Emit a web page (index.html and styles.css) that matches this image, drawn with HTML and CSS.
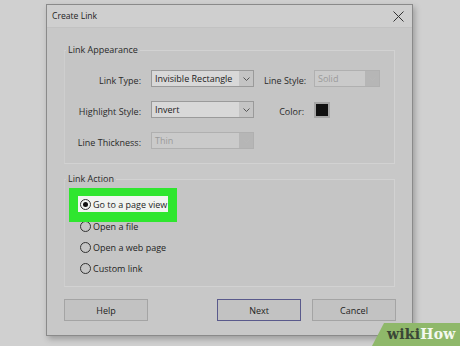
FILE: index.html
```html
<!DOCTYPE html>
<html>
<head>
<meta charset="utf-8">
<link rel="stylesheet" href="styles.css">
</head>
<body>
<div class="dialog">
  <div class="titlebar">
    <span class="title">Create Link</span>
    <svg class="close" width="11" height="11" viewBox="0 0 11 11"><path d="M0.5 0.5 L10.5 10.5 M10.5 0.5 L0.5 10.5" stroke="#333" stroke-width="1"/></svg>
  </div>
  <div class="content">
    <fieldset class="group appearance">
      <legend>Link Appearance</legend>
      <div class="grid">
        <label class="lbl">Link Type:</label>
        <div class="select"><span class="val">Invisible Rectangle</span><span class="arrow"><svg width="7" height="4" viewBox="0 0 7 4"><path d="M0.5 0.5 L3.5 3.5 L6.5 0.5" fill="none" stroke="#555" stroke-width="1"/></svg></span></div>
        <label class="lbl">Line Style:</label>
        <div class="select disabled"><span class="val">Solid</span><span class="arrow"><svg width="7" height="4" viewBox="0 0 7 4"><path d="M0.5 0.5 L3.5 3.5 L6.5 0.5" fill="none" stroke="#b8b8b8" stroke-width="1"/></svg></span></div>

        <label class="lbl">Highlight Style:</label>
        <div class="select"><span class="val">Invert</span><span class="arrow"><svg width="7" height="4" viewBox="0 0 7 4"><path d="M0.5 0.5 L3.5 3.5 L6.5 0.5" fill="none" stroke="#555" stroke-width="1"/></svg></span></div>
        <label class="lbl">Color:</label>
        <div class="swatch-cell"><span class="swatch"></span></div>

        <label class="lbl">Line Thickness:</label>
        <div class="select disabled"><span class="val">Thin</span><span class="arrow"><svg width="7" height="4" viewBox="0 0 7 4"><path d="M0.5 0.5 L3.5 3.5 L6.5 0.5" fill="none" stroke="#b8b8b8" stroke-width="1"/></svg></span></div>
      </div>
    </fieldset>

    <fieldset class="group action">
      <legend>Link Action</legend>
      <div class="radios">
        <div class="hl">
          <div class="radio sel"><span class="circle checked"></span>Go to a page view</div>
        </div>
        <div class="radio"><span class="circle"></span>Open a file</div>
        <div class="radio"><span class="circle"></span>Open a web page</div>
        <div class="radio"><span class="circle"></span>Custom link</div>
      </div>
    </fieldset>

    <div class="buttons">
      <button class="btn">Help</button>
      <div class="spacer"></div>
      <button class="btn primary">Next</button>
      <button class="btn">Cancel</button>
    </div>
  </div>
</div>
<div class="wikihow"><span class="wiki">wiki</span><span class="how">How</span></div>
</body>
</html>
```
FILE: styles.css
```css
html, body {
  margin: 0;
  padding: 0;
}
body {
  width: 460px;
  height: 346px;
  background: #d0d0d0;
  font-family: "Open Sans", "Noto Sans", sans-serif;
  font-size: 9px;
  color: #222;
  overflow: hidden;
  position: relative;
}
.dialog {
  margin: 4px 0 0 46px;
  width: 365px;
  height: 330px;
  border: 1px solid #8a8a8a;
  background: #c8c8c8;
  box-shadow: 2px 3px 6px rgba(0,0,0,0.25);
  display: flex;
  flex-direction: column;
}
.titlebar {
  height: 22px;
  background: #cfcfcf;
  border-bottom: 1px solid #c2c2c2;
  display: flex;
  align-items: center;
  justify-content: space-between;
  padding: 0 8px 0 5px;
}
.title {
  font-size: 8.6px;
  color: #1e1e1e;
}
.content {
  padding: 16px 15px 0 17px;
  display: flex;
  flex-direction: column;
}
.group {
  margin: 0;
  padding: 0;
  border: 1px solid #d2d2d2;
  border-left-color: #cecece;
  background: #c5c5c5;
  width: 331px;
  box-sizing: border-box;
}
.group legend {
  padding: 0 2px;
  margin-left: 1px;
  font-size: 9px;
  color: #2a2a2a;
  line-height: 12px;
}
.appearance {
  height: 120px;
}
.grid {
  display: grid;
  grid-template-columns: 76px 103px 40px 66px;
  grid-auto-rows: 17px;
  column-gap: 10px;
  row-gap: 14px;
  padding-top: 14px;
  align-items: center;
}
.lbl {
  text-align: right;
  white-space: nowrap;
  color: #2a2a2a;
  line-height: 17px;
  padding-top: 3px;
}
.select {
  height: 17px;
  box-sizing: border-box;
  border: 1px solid #9a9a9a;
  background: #d8d8d8;
  display: flex;
  align-items: center;
  justify-content: space-between;
}
.select .val {
  padding-left: 3px;
  color: #222;
  white-space: nowrap;
  line-height: 14px;
}
.select .arrow {
  width: 14px;
  height: 15px;
  background: #c4c4c4;
  display: flex;
  align-items: center;
  justify-content: center;
}
.select.disabled {
  background: #cacaca;
  border-color: #b0b0b0;
}
.select.disabled .val {
  color: #9a9a9a;
}
.select.disabled .arrow {
  background: #b6b6b6;
}
.swatch-cell {
  display: flex;
  align-items: center;
}
.swatch {
  width: 12px;
  height: 12px;
  border: 2px solid #a6a6a6;
  background: #111;
  display: block;
}
.action {
  margin-top: 9px;
  height: 114px;
}
.radios {
  display: flex;
  flex-direction: column;
  padding: 3px 0 0 4px;
}
.hl {
  align-self: flex-start;
  background: #2fe62f;
  padding: 8px 9px 10px 9px;
  margin-bottom: -6px;
  position: relative;
}
.radio {
  display: flex;
  align-items: center;
  height: 21px;
  padding-left: 11px;
  color: #1e1e1e;
  font-size: 9px;
  white-space: nowrap;
}
.radio.sel {
  background: #f1f4f1;
  height: 16px;
  padding: 0 1px 0 2px;
}
.circle {
  width: 9px;
  height: 9px;
  border: 1px solid #333;
  border-radius: 50%;
  margin-right: 2px;
  box-sizing: content-box;
  display: inline-flex;
  align-items: center;
  justify-content: center;
}
.circle.checked::after {
  content: "";
  width: 5px;
  height: 5px;
  border-radius: 50%;
  background: #111;
}
.buttons {
  display: flex;
  margin-top: 12px;
  width: 332px;
}
.spacer {
  flex: 1;
}
.btn {
  width: 84px;
  height: 22px;
  margin: 0;
  padding: 0;
  border: 1px solid #a4a4a4;
  background: #c2c2c2;
  font-family: "Open Sans", "Noto Sans", sans-serif;
  font-size: 9px;
  color: #222;
}
.btn.primary {
  border-color: #5a5a8c;
  margin-right: 11px;
}
.wikihow {
  position: absolute;
  right: 0;
  bottom: 0;
  width: 88px;
  height: 23px;
  background: #8fb86a;
  clip-path: polygon(12px 0, 100% 0, 100% 100%, 0 100%);
  font-family: "DejaVu Serif", "Liberation Serif", serif;
  font-weight: bold;
  font-size: 14px;
  line-height: 23px;
  padding-left: 15px;
  box-sizing: border-box;
  letter-spacing: 0.2px;
}
.wiki {
  color: #3a4636;
}
.how {
  color: #f4f8f0;
}
```
